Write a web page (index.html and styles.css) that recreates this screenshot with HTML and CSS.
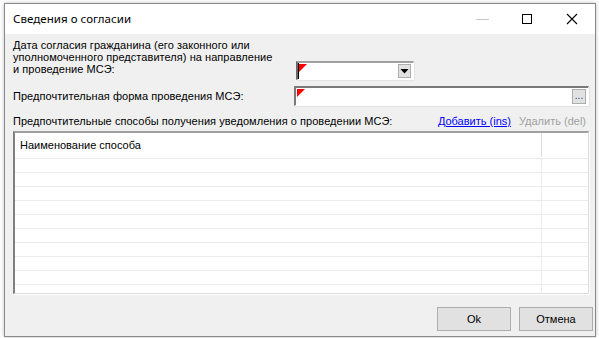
FILE: index.html
```html
<!DOCTYPE html>
<html lang="ru">
<head>
<meta charset="utf-8">
<title>Сведения о согласии</title>
<link rel="stylesheet" href="styles.css">
</head>
<body>
<div class="desktop">
  <div class="window">
    <div class="titlebar">
      <span class="title">Сведения о согласии</span>
      <div class="controls">
        <span class="ctl min"><svg width="14" height="14" viewBox="0 0 14 14"><path d="M1 7.5H14" stroke="#c6c6c6" stroke-width="1"/></svg></span>
        <span class="ctl max"><svg width="12" height="12" viewBox="0 0 12 12"><rect x="1.5" y="1.5" width="9" height="9" fill="none" stroke="#000" stroke-width="1"/></svg></span>
        <span class="ctl close"><svg width="12" height="12" viewBox="0 0 12 12"><path d="M1 1L11 11M11 1L1 11" stroke="#000" stroke-width="1.1"/></svg></span>
      </div>
    </div>
    <div class="content">
      <div class="form">
        <div class="label multi">Дата согласия гражданина (его законного или<br>уполномоченного представителя) на направление<br>и проведение МСЭ:</div>
        <div class="combo">
          <span class="flag"></span>
          <span class="caret"></span>
          <span class="dropbtn"><svg width="9" height="6" viewBox="0 0 9 6"><path d="M0.5 1H8.5L4.5 5.5Z" fill="#000"/></svg></span>
        </div>
        <div class="label single">Предпочтительная форма проведения МСЭ:</div>
        <div class="field">
          <span class="flag"></span>
          <span class="dots">...</span>
        </div>
      </div>
      <div class="listhead">
        <span class="label">Предпочтительные способы получения уведомления о проведении МСЭ:</span>
        <span class="actions"><a class="link">Добавить (ins)</a><span class="disabled">Удалить (del)</span></span>
      </div>
      <div class="grid">
        <div class="row head"><div class="c1">Наименование способа</div><div class="c2"></div></div>
        <div class="row"><div class="c1"></div><div class="c2"></div></div>
        <div class="row"><div class="c1"></div><div class="c2"></div></div>
        <div class="row"><div class="c1"></div><div class="c2"></div></div>
        <div class="row"><div class="c1"></div><div class="c2"></div></div>
        <div class="row"><div class="c1"></div><div class="c2"></div></div>
        <div class="row"><div class="c1"></div><div class="c2"></div></div>
        <div class="row"><div class="c1"></div><div class="c2"></div></div>
        <div class="row"><div class="c1"></div><div class="c2"></div></div>
        <div class="row"><div class="c1"></div><div class="c2"></div></div>
        <div class="row"><div class="c1"></div><div class="c2"></div></div>
      </div>
      <div class="buttons">
        <button class="btn">Ok</button>
        <button class="btn">Отмена</button>
      </div>
    </div>
  </div>
</div>
</body>
</html>
```
FILE: styles.css
```css
html, body { margin: 0; padding: 0; }
body {
  width: 599px; height: 338px; overflow: hidden;
  background: #ffffff;
  font-family: "Liberation Sans", Arial, sans-serif;
  font-size: 11px; color: #000;
}
.desktop { padding: 3px 3px 0 4px; }
.window {
  width: 590px; height: 332px;
  border: 1px solid #8a8a8a;
  background: #f0f0f0;
  display: flex; flex-direction: column;
  box-shadow: 0 0 4px rgba(0,0,0,0.25);
}
.titlebar {
  height: 30px; background: #fff;
  display: flex; align-items: center; justify-content: space-between;
}
.title { font-family: "Noto Sans", sans-serif; font-size: 11.5px; padding-left: 8px; padding-bottom: 2px; letter-spacing: 0.05px; }
.controls { display: flex; height: 30px; }
.ctl { display: flex; align-items: center; justify-content: center; width: 45px; height: 30px; }
.ctl.min { width: 44px; }
.ctl.close { width: 46px; }
.content { padding: 0 6px 0 8px; flex: 1; display: flex; flex-direction: column; }
.form { display: grid; grid-template-columns: 281px 1fr; row-gap: 6px; padding-top: 5px; }
.label { line-height: 12px; letter-spacing: 0.05px; }
.label.multi { height: 36px; }
.label.single { align-self: center; }
.combo {
  position: relative; align-self: start; margin-top: 22px; margin-left: 2px;
  width: 115px; height: 16px; background: #fff;
  border-top: 2px solid #a0a0a0; border-left: 2px solid #696969;
  border-right: 1px solid #fff; border-bottom: 1px solid #fff;
  box-shadow: 1px 1px 0 #e3e3e3;
}
.combo .caret { position: absolute; left: 0; top: 0; width: 1px; height: 16px; background: #000; }
.flag {
  position: absolute; left: 1px; top: 1px; width: 8px; height: 8px;
  background: #f00; clip-path: polygon(0 0, 100% 0, 0 100%);
}
.dropbtn {
  position: absolute; right: 2px; top: 1px; width: 13px; height: 14px;
  background: #e1e1e1; border: 1px solid #adadad; box-sizing: border-box;
  display: flex; align-items: center; justify-content: center;
}
.field {
  position: relative; height: 17px; background: #fff;
  border-top: 2px solid #7a7a7a; border-left: 2px solid #7a7a7a;
  border-right: 1px solid #fff; border-bottom: 1px solid #fff;
  box-shadow: 1px 1px 0 #e3e3e3;
}
.dots {
  position: absolute; right: 2px; top: 1px; width: 14px; height: 15px; box-sizing: border-box;
  background: #e1e1e1; border: 1px solid #adadad;
  font-size: 10px; line-height: 12px; text-align: center; color: #1d3d7a;
}
.listhead {
  margin-top: 8px; height: 14px; line-height: 14px;
  display: flex; justify-content: space-between; align-items: center;
}
.actions { display: flex; gap: 8px; padding-right: 3px; }
.link { color: #0000ff; text-decoration: underline; }
.disabled { color: #a0a0a0; }
.grid {
  margin-top: 3px; height: 160px; overflow: hidden; background: #fff;
  border-top: 2px solid #a0a0a0; border-left: 2px solid #808080;
  border-right: 1px solid #dcdcdc; border-bottom: 1px solid #dcdcdc;
  box-shadow: 1px 1px 0 #fff;
}
.row { display: flex; height: 13px; border-bottom: 1px solid #ebebeb; }
.row.head { height: 25px; }
.c1 { width: 526px; padding-left: 5px; box-sizing: border-box; }
.head .c1 { line-height: 25px; }
.c2 { flex: 1; border-left: 1px solid #ebebeb; }
.head .c2 { border-left-color: #dcdcdc; margin-bottom: 1px; }
.buttons { display: flex; justify-content: flex-end; gap: 8px; margin-top: 13px; margin-right: -4px; }
.btn {
  width: 74px; height: 24px; margin: 0; padding: 0;
  background: #e1e1e1; border: 1px solid #adadad;
  font-family: "Liberation Sans", Arial, sans-serif; font-size: 11px; color: #000;
}
```
